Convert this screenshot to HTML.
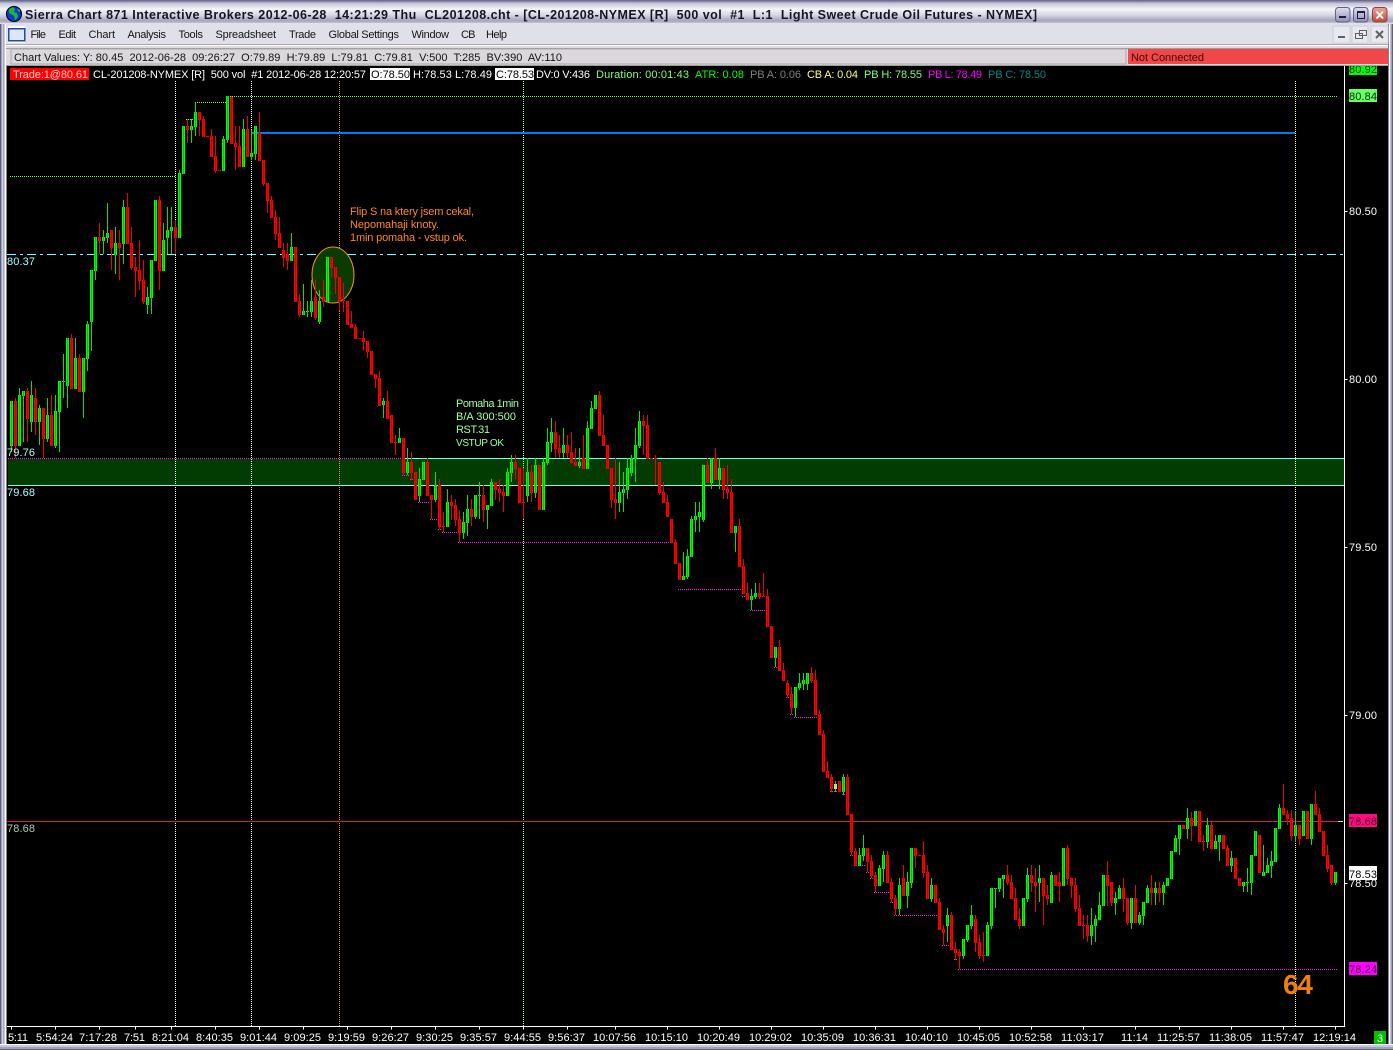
<!DOCTYPE html>
<html><head><meta charset="utf-8"><title>Sierra Chart</title>
<style>
html,body{margin:0;padding:0;background:#000;width:1393px;height:1050px;overflow:hidden}
svg{display:block}
text{font-family:"Liberation Sans",Arial,sans-serif;font-size:11px;white-space:pre}
.c{shape-rendering:crispEdges}
.d{stroke-dasharray:1 1;fill:none}
</style></head><body>
<svg width="1393" height="1050" viewBox="0 0 1393 1050" xmlns="http://www.w3.org/2000/svg">
<defs>
<linearGradient id="tb" x1="0" y1="0" x2="0" y2="1">
<stop offset="0" stop-color="#5f5f85"/><stop offset=".09" stop-color="#9d9db8"/><stop offset=".14" stop-color="#c4c4d6"/><stop offset=".38" stop-color="#f4f4f8"/><stop offset=".62" stop-color="#d8d8e4"/><stop offset=".85" stop-color="#a6a6be"/><stop offset=".93" stop-color="#b4b4ca"/><stop offset="1" stop-color="#f4f4f8"/>
</linearGradient>
<linearGradient id="bt" x1="0" y1="0" x2="0" y2="1"><stop offset="0" stop-color="#e0e0ee"/><stop offset="1" stop-color="#8f8fb4"/></linearGradient>
<linearGradient id="bc" x1="0" y1="0" x2="0" y2="1"><stop offset="0" stop-color="#e8a898"/><stop offset="1" stop-color="#c04838"/></linearGradient>
<path id="gb" d="M11 401V446M19 395V446M23 391V396M31 395V422M39 408V422M47 415V439M55 411V446M59 381V412M63 381V382M67 338V386M75 358V389M83 358V392M87 324V359M91 270V322M95 237V271M103 237V241M107 233V238M115 243V255M123 207V244M147 297V305M151 260V298M155 200V261M163 240V271M167 230V238M171 227V231M179 173V238M183 126V174M191 126V130M195 112V127M223 139V171M227 96V140M243 129V167M251 153V157M255 126V154M291 247V261M303 311V315M307 311V312M311 301V312M319 301V322M327 257V302M383 401V405M399 438V443M407 462V473M419 479V496M423 462V480M435 485V500M447 502V527M463 522V533M467 509V523M475 495V517M479 495V496M487 505V510M491 482V506M507 472V496M511 462V473M527 472V496M535 465V493M543 462V510M547 442V463M551 432V443M563 445V453M579 462V466M587 428V469M591 408V429M595 395V409M619 492V503M623 489V493M627 468V490M631 458V473M635 445V459M639 421V446M683 576V580M687 556V577M691 519V557M695 516V520M699 512V517M703 465V520M711 458V483M719 468V480M735 526V533M751 596V600M755 593V597M775 647V658M795 687V708M799 683V688M803 680V684M807 673V684M835 784V789M843 777V792M859 855V866M863 848V856M879 868V886M883 855V869M899 885V909M907 882V896M911 848V883M931 885V899M947 915V926M963 939V956M967 925V940M971 915V926M987 925V956M991 888V926M995 888V889M999 878V889M1003 875V879M1023 898V926M1027 875V899M1039 878V883M1051 875V903M1063 848V886M1091 925V936M1095 919V926M1099 905V920M1103 875V906M1115 898V903M1119 888V899M1131 898V923M1139 915V923M1143 902V916M1147 888V903M1155 888V893M1163 885V893M1167 878V886M1171 851V879M1175 838V852M1179 825V839M1187 818V829M1195 811V826M1207 825V842M1215 841V849M1219 835V842M1231 858V866M1243 882V886M1247 882V883M1251 855V883M1255 831V856M1263 872V876M1267 865V873M1271 861V866M1275 828V862M1279 808V829M1295 825V836M1303 811V836M1311 804V839M1335 872V883"/>
<path id="rb" d="M15 401V446M27 391V419M35 398V422M43 408V439M51 415V446M71 338V389M79 358V392M99 237V241M111 230V248M119 243V248M127 207V244M131 243V268M135 267V271M139 270V281M143 280V302M159 200V271M175 227V238M187 126V130M199 112V120M203 119V137M207 136V137M211 136V157M215 156V171M219 170V171M231 97V144M235 143V147M239 146V167M247 129V157M259 133V161M263 160V184M267 183V201M271 200V218M275 217V234M279 233V248M283 250V258M287 254V261M295 247V302M299 301V315M315 297V318M323 297V302M331 257V268M335 267V278M339 277V302M343 300V301M347 301V325M351 324V328M355 327V339M359 338V339M363 338V342M367 341V352M371 351V375M375 374V379M379 378V406M387 401V419M391 415V443M395 442V443M403 438V473M411 462V473M415 472V500M427 462V496M431 495V500M439 485V527M443 526V527M451 502V506M455 505V520M459 519V533M471 509V517M483 495V510M495 482V490M499 489V493M503 492V496M515 462V469M519 468V503M523 502V503M531 472V493M539 465V510M555 432V449M559 448V453M567 445V453M571 452V463M575 462V466M583 458V469M599 395V436M603 435V446M607 445V469M611 468V500M615 499V503M643 421V426M647 425V459M651 458V459M655 458V459M659 462V493M663 492V503M667 502V517M671 519V543M675 542V564M679 563V580M707 465V483M715 458V480M723 468V490M727 489V493M731 492V533M739 526V567M743 566V594M747 593V600M759 593V597M763 596V597M767 596V627M771 626V658M779 647V671M783 670V681M787 683V695M791 694V708M811 673V681M815 680V715M819 714V735M823 734V772M827 771V778M831 777V789M839 781V792M847 777V815M851 814V852M855 851V866M867 848V862M871 861V876M875 875V886M887 855V883M891 882V899M895 898V909M903 878V896M915 848V856M919 855V856M923 855V873M927 872V899M935 885V903M939 902V930M943 929V933M951 915V950M955 949V953M959 952V956M975 919V943M979 942V956M983 955V956M1007 875V883M1011 882V899M1015 898V920M1019 919V926M1031 875V883M1035 882V886M1043 878V896M1047 895V899M1055 875V886M1059 882V886M1067 848V879M1071 878V886M1075 885V909M1079 908V926M1083 925V926M1087 925V936M1107 875V886M1111 882V903M1123 888V899M1127 898V923M1135 898V923M1151 888V893M1159 888V893M1183 825V829M1191 818V826M1199 811V842M1203 841V842M1211 825V849M1223 835V849M1227 848V866M1235 858V879M1239 878V886M1259 835V873M1283 808V815M1287 814V819M1291 818V836M1299 825V839M1307 811V839M1315 804V815M1319 814V832M1323 831V856M1327 855V869M1331 865V883"/>
</defs>

<rect width="1393" height="1050" fill="#000"/>

<g class="c">
<rect x="8" y="459" width="1336" height="26" fill="#033c03"/>
<g stroke-width="1" transform="translate(.5 0)">
<path class="d" stroke="#fff" d="M175 81V1026M251 81V1026"/>
<path class="d" stroke="#f09030" d="M339 81V1026"/>
<path class="d" stroke="#b0ffb0" d="M523 81V1026"/>
<path class="d" stroke="#ffff70" d="M1295 81V1026"/>
</g>
<g stroke-width="1" transform="translate(0 .5)">
<path class="d" stroke="#70ff70" d="M230 96H1337M195 102H227M186 119H193M10 176H175"/>
<path stroke="#70ffff" stroke-dasharray="9 4 3 4" fill="none" d="M7 254H1344"/>
<path class="d" stroke="#ff20ff" d="M8 458H402"/>
<path stroke="#70ffe8" fill="none" d="M402 458H1344M8 485H1344"/>
<path stroke="#e0106e" fill="none" d="M7 821H1338"/>
<path stroke="#70ffff" fill="none" d="M1338 821H1343"/>
<path class="d" stroke="#ff20ff" d="M402 475H409M410 479H413M414 499H417M418 502H429M430 519H437M438 529H441M442 532H457M458 542H672M674 563H677M678 589H741M742 596H745M746 599H749M750 610H765M766 626H769M770 657H773M774 667H777M778 670H781M782 680H785M786 697H789M790 714H793M794 717H817M818 734H821M822 771H825M826 777H829M830 791H841M842 794H845M846 814H849M850 855H853M854 865H865M866 872H869M870 878H873M874 892H889M890 902H893M894 915H937M938 929H941M942 945H949M950 949H953M954 959H957M958 969H1338"/>
</g>
<rect x="251" y="132" width="1044" height="2" fill="#0a78f0"/>
</g>

<ellipse cx="333" cy="275" rx="21" ry="28" fill="#0a3c02" stroke="#f09020" stroke-width="1"/>

<g class="c" fill="none" transform="translate(.5 0)">
<path stroke="#00e800" d="M11 401V452M19 388V446M23 391V442M31 381V432M39 405V445M47 398V442M55 395V448M59 381V452M63 354V398M67 338V408M75 338V389M83 358V418M87 321V371M91 270V351M95 237V280M103 230V254M107 203V243M115 227V274M123 200V264M147 287V314M151 260V314M163 223V271M167 207V254M171 207V254M179 170V238M191 119V143M195 102V136M223 136V171M227 96V143M243 119V167M251 130V160M255 126V160M291 233V261M303 284V315M307 301V317M311 280V317M319 290V324M383 398V418M399 428V443M407 448V475M419 468V502M435 472V502M447 489V527M463 512V539M467 495V536M475 495V519M479 482V519M487 505V529M491 479V506M507 468V496M511 455V482M527 458V502M535 458V498M543 458V510M547 428V465M551 418V452M563 428V458M579 448V468M587 421V469M591 401V429M619 462V512M623 472V512M627 458V499M631 455V476M635 428V482M639 411V448M683 552V580M687 549V579M691 516V557M695 502V532M699 502V532M703 465V522M711 458V489M719 458V489M735 526V552M751 589V610M755 583V599M775 647V667M795 687V717M799 673V690M803 673V690M807 673V690M835 781V792M843 774V795M859 848V866M863 835V861M879 865V886M883 851V882M899 878V915M907 872V908M911 848V888M931 878V902M947 908V942M963 939V959M967 925V942M971 905V929M987 922V956M991 888V929M995 888V908M999 878V892M1003 875V898M1027 868V902M1039 865V902M1051 872V903M1091 908V945M1095 915V942M1099 892V920M1115 892V915M1119 885V899M1131 898V929M1139 912V925M1143 902V925M1147 885V903M1155 882V905M1163 882V905M1175 835V852M1179 825V855M1187 808V839M1207 818V848M1215 835V849M1219 835V861M1231 851V872M1243 882V892M1247 868V892M1251 855V895M1263 845V876M1267 858V873M1271 851V878M1279 804V829M1295 811V842M1311 804V845M1335 872V885"/>
<path stroke="#f00000" d="M15 398V458M27 388V442M35 388V435M43 408V458M51 395V446M71 334V389M79 354V392M99 223V254M111 230V270M119 230V280M127 193V244M131 227V270M135 257V297M139 240V290M143 260V304M159 196V290M175 220V254M187 119V143M199 112V136M203 116V137M211 129V157M215 136V173M231 96V144M235 126V170M239 126V167M247 116V157M259 112V161M263 160V186M267 183V213M271 196V218M275 210V240M279 217V248M283 243V267M287 243V270M299 294V317M315 280V320M323 280V307M331 257V277M335 267V294M339 277V311M343 283V312M351 311V328M355 324V339M363 331V351M367 341V358M375 374V388M379 371V406M387 391V419M395 435V455M403 438V475M411 452V480M427 458V496M431 495V519M439 479V529M443 512V532M451 495V520M455 499V526M459 510V542M471 499V526M483 485V522M495 482V500M499 479V502M503 485V512M515 455V479M523 468V519M531 465V502M555 421V458M559 435V458M567 435V458M571 432V463M575 448V466M583 435V469M599 391V436M603 415V446M611 468V508M615 458V519M643 415V455M647 415V459M655 455V485M659 462V495M663 482V503M667 495V517M675 539V564M707 458V483M715 448V480M723 468V499M727 465V499M731 479V533M739 519V567M743 559V594M747 583V600M759 583V599M763 573V597M767 589V627M779 640V671M783 663V681M787 680V697M791 687V714M811 667V683M815 670V715M819 710V735M823 730V772M827 761V778M831 774V792M847 774V815M851 814V855M855 848V866M867 848V872M871 855V878M875 872V892M887 851V883M891 878V902M895 895V915M903 865V896M915 848V868M923 841V878M927 865V899M939 898V930M943 925V945M951 912V950M955 942V960M959 949V969M975 915V952M979 935V959M983 932V962M1007 865V885M1011 875V899M1015 888V920M1019 908V929M1031 865V892M1035 868V912M1043 878V925M1047 885V905M1059 872V902M1067 845V885M1071 878V898M1075 878V912M1079 895V926M1083 915V939M1087 915V942M1107 861V906M1111 882V906M1123 878V912M1127 898V925M1135 885V923M1151 875V905M1159 882V902M1191 812V841M1203 835V851M1211 822V849M1227 845V866M1283 784V815M1287 810V825M1291 810V841M1299 825V845M1315 791V815M1319 808V832M1327 845V872M1331 865V885"/>
<g stroke-width="3" stroke="#00ff00"><use href="#gb"/></g>
<g stroke-width="1" stroke="#00c400"><use href="#gb"/></g>
<g stroke-width="3" stroke="#ff0000"><use href="#rb"/></g>
<g stroke-width="1" stroke="#d40000"><use href="#rb"/></g>
</g>
<rect x="834" y="784" width="3" height="5" fill="#80ff80" class="c"/>

<g fill="#ff8a1c">
<text x="350" y="215" textLength="124">Flip S na ktery jsem cekal,</text>
<text x="350" y="228" textLength="89">Nepomahaji knoty.</text>
<text x="350" y="241" textLength="117">1min pomaha - vstup ok.</text>
</g>
<g fill="#a0ffa0">
<text x="456" y="407" textLength="63">Pomaha 1min</text>
<text x="456" y="420" textLength="60">B/A 300:500</text>
<text x="456" y="433" textLength="34">RST.31</text>
<text x="456" y="446" textLength="48" style="font-size:10px">VSTUP OK</text>
</g>
<g fill="#a8ffff">
<text x="7" y="265" textLength="28">80.37</text>
<text x="7" y="456" textLength="28">79.76</text>
<text x="7" y="496" textLength="28">79.68</text>
</g>
<text x="7" y="832" textLength="28" fill="#a8c8b0">78.68</text>
<text x="1283" y="994" font-weight="bold" style="font-size:28px" fill="#f08008" textLength="30">64</text>

<!-- axes -->
<g class="c" fill="#fff">
<rect x="1344" y="66" width="1" height="961"/>
<rect x="7" y="1026" width="1338" height="1"/>
<path stroke="#fff" stroke-width="1" fill="none" transform="translate(.5 .5)" d="M11 1026V1029M55 1026V1029M99 1026V1029M135 1026V1029M171 1026V1029M215 1026V1029M259 1026V1029M303 1026V1029M347 1026V1029M391 1026V1029M435 1026V1029M479 1026V1029M523 1026V1029M567 1026V1029M615 1026V1029M667 1026V1029M719 1026V1029M771 1026V1029M823 1026V1029M875 1026V1029M927 1026V1029M979 1026V1029M1031 1026V1029M1083 1026V1029M1135 1026V1029M1179 1026V1029M1231 1026V1029M1283 1026V1029M1335 1026V1029M1344 211H1347M1344 379H1347M1344 547H1347M1344 715H1347M1344 883H1347"/>
</g>
<g fill="#fff">
<text x="1349" y="215" textLength="28">80.50</text>
<text x="1349" y="383" textLength="28">80.00</text>
<text x="1349" y="551" textLength="28">79.50</text>
<text x="1349" y="719" textLength="28">79.00</text>
<text x="1349" y="887" textLength="28">78.50</text>
</g>
<g class="c">
<rect x="1349" y="66" width="28" height="9" fill="#00ff00"/>
<rect x="1349" y="89" width="28" height="13" fill="#66ff66"/>
<rect x="1349" y="814" width="28" height="13" fill="#ff0a80"/>
<rect x="1349" y="866" width="28" height="14" fill="#fff"/>
<rect x="1349" y="962" width="28" height="13" fill="#ff00ff"/>
</g>
<text x="1349" y="73" textLength="28" fill="#003000">80.92</text>
<text x="1349" y="100" textLength="28" fill="#003000">80.84</text>
<text x="1349" y="825" textLength="28" fill="#500020">78.68</text>
<text x="1349" y="878" textLength="28" fill="#000">78.53</text>
<text x="1349" y="973" textLength="28" fill="#400040">78.24</text>

<g fill="#fff">
<text x="8" y="1041" textLength="20">5:11</text>
<text x="36" y="1041" textLength="37">5:54:24</text>
<text x="79" y="1041" textLength="38">7:17:28</text>
<text x="124" y="1041" textLength="21">7:51</text>
<text x="152" y="1041" textLength="37">8:21:04</text>
<text x="196" y="1041" textLength="37">8:40:35</text>
<text x="240" y="1041" textLength="37">9:01:44</text>
<text x="284" y="1041" textLength="37">9:09:25</text>
<text x="328" y="1041" textLength="37">9:19:59</text>
<text x="372" y="1041" textLength="37">9:26:27</text>
<text x="416" y="1041" textLength="37">9:30:25</text>
<text x="460" y="1041" textLength="37">9:35:57</text>
<text x="504" y="1041" textLength="37">9:44:55</text>
<text x="548" y="1041" textLength="37">9:56:37</text>
<text x="593" y="1041" textLength="43">10:07:56</text>
<text x="645" y="1041" textLength="43">10:15:10</text>
<text x="697" y="1041" textLength="43">10:20:49</text>
<text x="749" y="1041" textLength="43">10:29:02</text>
<text x="801" y="1041" textLength="43">10:35:09</text>
<text x="853" y="1041" textLength="43">10:36:31</text>
<text x="905" y="1041" textLength="43">10:40:10</text>
<text x="957" y="1041" textLength="43">10:45:05</text>
<text x="1009" y="1041" textLength="43">10:52:58</text>
<text x="1061" y="1041" textLength="43">11:03:17</text>
<text x="1121" y="1041" textLength="27">11:14</text>
<text x="1157" y="1041" textLength="43">11:25:57</text>
<text x="1209" y="1041" textLength="43">11:38:05</text>
<text x="1261" y="1041" textLength="43">11:57:47</text>
<text x="1313" y="1041" textLength="43">12:19:14</text>
</g>
<rect x="1374" y="1031" width="12" height="13" fill="#00c000" class="c"/>
<text x="1377" y="1042" fill="#fff">3</text>

<!-- chart header -->
<g class="c">
<rect x="10" y="68" width="79" height="12" fill="#ff0000"/>
<rect x="370" y="68" width="40" height="12" fill="#fff"/>
<rect x="495" y="68" width="39" height="12" fill="#fff"/>
</g>
<text x="13" y="78" textLength="75" fill="#ffd0d0">Trade:1@80.61</text>
<text x="93" y="78" textLength="273" fill="#fff">CL-201208-NYMEX [R]  500 vol  #1 2012-06-28 12:20:57</text>
<text x="371" y="78" textLength="39" fill="#000">O:78.50</text>
<text x="413" y="78" textLength="79" fill="#fff">H:78.53 L:78.49</text>
<text x="496" y="78" textLength="38" fill="#000">C:78.53</text>
<text x="536" y="78" textLength="54" fill="#fff">DV:0 V:436</text>
<text x="596" y="78" textLength="93" fill="#80ff80">Duration: 00:01:43</text>
<text x="695" y="78" textLength="49" fill="#00ff00">ATR: 0.08</text>
<text x="750" y="78" textLength="51" fill="#808080">PB A: 0.06</text>
<text x="807" y="78" textLength="51" fill="#ffff80">CB A: 0.04</text>
<text x="864" y="78" textLength="58" fill="#80ff80">PB H: 78.55</text>
<text x="928" y="78" textLength="54" fill="#ff00ff">PB L: 78.49</text>
<text x="988" y="78" textLength="58" fill="#008888">PB C: 78.50</text>

<!-- window chrome -->
<g class="c">
<rect x="0" y="46" width="1393" height="20" fill="#dfdadf"/>
<rect x="0" y="65" width="1393" height="1" fill="#a0a0a0"/>
<rect x="0" y="24" width="1393" height="20" fill="#dfe0ea"/>
<rect x="0" y="44" width="1393" height="1" fill="#a8a8b0"/>
<rect x="0" y="45" width="1393" height="1" fill="#fff"/>
<rect x="0" y="48" width="1393" height="1" fill="#9c9ca0"/>
<rect x="11" y="49" width="1115" height="15" fill="#dcd7dc" stroke="#a8a8a8" stroke-width="1"/>
<rect x="1128" y="49" width="260" height="15" fill="#f04848"/>
<!-- frame -->
<rect x="0" y="24" width="1" height="1026" fill="#5f5f85"/>
<rect x="1" y="24" width="1" height="1026" fill="#a0a0b8"/>
<rect x="2" y="24" width="1" height="1026" fill="#d0d0de"/>
<rect x="3" y="24" width="1" height="1026" fill="#a8a8c0"/>
<rect x="4" y="24" width="1" height="1026" fill="#c8c8d8"/>
<rect x="5" y="24" width="1" height="1026" fill="#fff"/>
<rect x="6" y="66" width="1" height="978" fill="#808080"/>
<rect x="1388" y="24" width="1" height="1026" fill="#808088"/>
<rect x="1389" y="24" width="1" height="1026" fill="#fff"/>
<rect x="1390" y="24" width="1" height="1026" fill="#c0c0d0"/>
<rect x="1391" y="24" width="1" height="1026" fill="#a0a0b8"/>
<rect x="1392" y="24" width="1" height="1026" fill="#5f5f85"/>
<rect x="0" y="1044" width="1393" height="1" fill="#fff"/>
<rect x="0" y="1045" width="1393" height="2" fill="#c8c8d8"/>
<rect x="0" y="1047" width="1393" height="2" fill="#a0a0b8"/>
<rect x="0" y="1049" width="1393" height="1" fill="#5f5f85"/>
</g>
<rect width="1393" height="24" fill="url(#tb)"/>

<!-- globe -->
<circle cx="14" cy="14" r="7.5" fill="#1238c8" stroke="#08082a" stroke-width="1.2"/>
<path d="M9 9l4-2 2 2-1 3 3 1 1 4-3 3-1-4-3-2-2-1zM17 8l3 2 0 2-2-1z" fill="#18b838"/>

<text x="25" y="19" font-weight="bold" style="font-size:12.5px" fill="#141428" textLength="1012">Sierra Chart 871 Interactive Brokers 2012-06-28  14:21:29 Thu  CL201208.cht - [CL-201208-NYMEX [R]  500 vol  #1  L:1  Light Sweet Crude Oil Futures - NYMEX]</text>

<!-- title buttons -->
<rect x="1335.5" y="7.5" width="14.5" height="14.5" rx="3" fill="url(#bt)" stroke="#606088"/>
<rect x="1353.5" y="7.5" width="14.5" height="14.5" rx="3" fill="url(#bt)" stroke="#606088"/>
<rect x="1372.5" y="7.5" width="14.5" height="14.5" rx="3" fill="url(#bc)" stroke="#904040"/>
<g class="c">
<rect x="1339" y="16" width="7" height="2" fill="#1c1c40"/>
<rect x="1357.5" y="11.5" width="7" height="7" fill="none" stroke="#1c1c40"/>
<rect x="1357" y="11" width="8" height="2" fill="#1c1c40"/>
</g>
<path d="M1376.5 11.5l6.5 7M1383 11.5l-6.5 7" stroke="#fff" stroke-width="2" fill="none"/>

<!-- MDI buttons -->
<g class="c">
<rect x="1333" y="26" width="17" height="17" fill="#e6eaee" stroke="#ccd0d4"/>
<rect x="1352" y="26" width="16" height="17" fill="#e6eaee" stroke="#ccd0d4"/>
<rect x="1371" y="26" width="17" height="17" fill="#e6eaee" stroke="#ccd0d4"/>
<rect x="1338" y="36" width="7" height="2" fill="#606068"/>
<path d="M1359.5 30.5h7v5h-7zM1355.5 33.5h7v5h-7z" fill="#e6eaee" stroke="#606068"/>
</g>
<path d="M1376 31l7 7M1383 31l-7 7" stroke="#606068" stroke-width="2" fill="none"/>

<!-- menu -->
<rect x="8" y="26" width="17" height="17" fill="#fbfbfd" class="c"/>
<rect x="8.5" y="28.5" width="16" height="12" fill="#dce6f8" stroke="#1c4ea0" stroke-width="1.5" class="c"/>
<g fill="#141414">
<text x="30.5" y="38" textLength="15.5">File</text>
<text x="58.5" y="38" textLength="17.5">Edit</text>
<text x="88.5" y="38" textLength="26.5">Chart</text>
<text x="127.5" y="38" textLength="38.5">Analysis</text>
<text x="178.5" y="38" textLength="24.5">Tools</text>
<text x="215.5" y="38" textLength="60.5">Spreadsheet</text>
<text x="289" y="38" textLength="27">Trade</text>
<text x="328.5" y="38" textLength="70.5">Global Settings</text>
<text x="411.5" y="38" textLength="37.5">Window</text>
<text x="461" y="38" textLength="14.5">CB</text>
<text x="486" y="38" textLength="21">Help</text>
<text x="14" y="61" textLength="548">Chart Values: Y: 80.45  2012-06-28  09:26:27  O:79.89  H:79.89  L:79.81  C:79.81  V:500  T:285  BV:390  AV:110</text>
<text x="1131" y="61" textLength="73" fill="#400808">Not Connected</text>
</g>
</svg>
</body></html>
